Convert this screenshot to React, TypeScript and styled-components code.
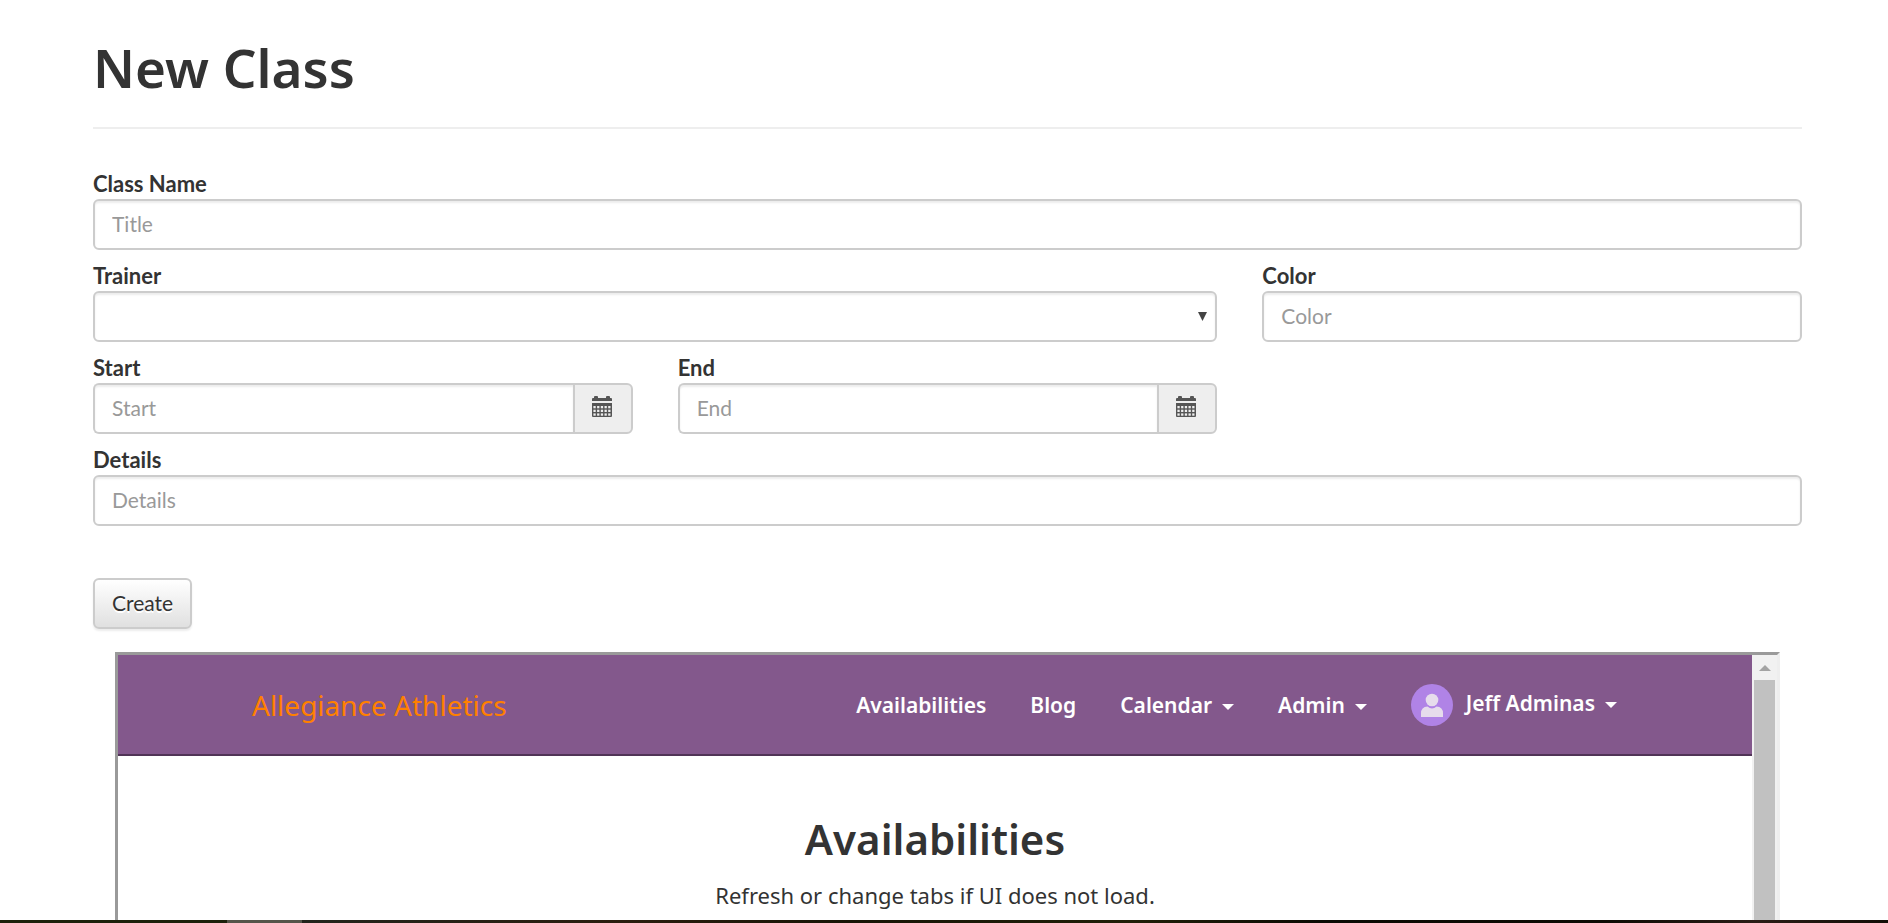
import React from "react";
import styled, { createGlobalStyle, css } from "styled-components";

const GlobalStyle = createGlobalStyle`
  *, *::before, *::after { box-sizing: border-box; }
  body {
    margin: 0;
    background: #fff;
    color: #333;
    font-family: Lato, "Open Sans", sans-serif;
    font-size: 21px;
    line-height: 30px;
  }
  input, select, button { font: inherit; }
`;

const Screen = styled.div`
  display: flex;
  flex-direction: column;
  height: 100vh;
  overflow: hidden;
`;

const Page = styled.main`
  flex: 1;
  min-height: 0;
  display: flex;
  flex-direction: column;
  padding: 38px 86px 0 93px;
`;

const PageTitle = styled.h1`
  margin: 0;
  padding-bottom: 29px;
  border-bottom: 2px solid #eee;
  font-family: "Noto Sans", sans-serif;
  font-size: 53px;
  font-weight: 600;
  line-height: 60px;
`;

const Form = styled.form`
  padding-top: 39px;
`;

const FieldGrid = styled.div`
  display: grid;
  grid-template-columns: repeat(3, 1fr);
  column-gap: 45px;
  row-gap: 10px;
`;

const Field = styled.div<{ $span?: number }>`
  grid-column: span ${(p) => p.$span ?? 1};
  display: flex;
  flex-direction: column;
  min-width: 0;
`;

const Label = styled.label`
  padding-top: 1px;
  font-size: 22px;
  font-weight: 700;
`;

const control = css`
  width: 100%;
  min-width: 0;
  height: 51px;
  padding: 0 17px 2px;
  border: 2px solid #ccc;
  border-radius: 6px;
  background: #fff;
  color: #555;
  box-shadow: inset 0 2px 2px rgba(0, 0, 0, 0.075);
  outline: none;
`;

const Input = styled.input<{ $joined?: boolean }>`
  ${control}
  &::placeholder { color: #999; opacity: 1; }
  ${(p) => p.$joined && "border-right: 0; border-radius: 6px 0 0 6px;"}
`;

const SelectWrap = styled.div`
  display: grid;
  align-items: center;
  > * { grid-area: 1 / 1; }
`;

const Select = styled.select`
  ${control}
  appearance: none;
`;

const SelectArrow = styled.svg`
  justify-self: end;
  margin-right: 10px;
  pointer-events: none;
`;

const Group = styled.div`
  display: flex;
`;

const Addon = styled.button`
  flex: 0 0 60px;
  display: flex;
  align-items: center;
  justify-content: center;
  padding: 0 2px 4px 0;
  border: 2px solid #ccc;
  border-radius: 0 6px 6px 0;
  background: #eee;
  color: #555;
`;

const CreateButton = styled.button`
  height: 51px;
  margin: 52px 0 23px;
  padding: 0 17px 2px;
  border: 2px solid #ccc;
  border-radius: 6px;
  background: linear-gradient(#fff, #e0e0e0);
  color: #333;
  text-shadow: 0 2px 0 #fff;
  box-shadow: inset 0 2px 0 rgba(255, 255, 255, 0.15), 0 2px 2px rgba(0, 0, 0, 0.075);
`;

const Frame = styled.section`
  flex: 1;
  min-height: 0;
  display: flex;
  margin: 0 22px;
  border: 3px solid;
  border-color: #9a9a9a #eee #eee #9a9a9a;
  border-bottom: 0;
`;

const FrameBody = styled.div`
  flex: 1;
  min-width: 0;
  overflow: hidden;
`;

const NavBar = styled.nav`
  height: 101px;
  padding: 0 112px;
  border-bottom: 2px solid #503456;
  background: #83588c;
`;

const NavInner = styled.div`
  display: flex;
  align-items: center;
  justify-content: space-between;
  max-width: 1410px;
  height: 100%;
  margin: 0 auto;
  padding: 0 22px;
  font-family: "Noto Sans", sans-serif;
`;

const Brand = styled.a`
  color: #ff8000;
  font-size: 28px;
  text-decoration: none;
`;

const NavLinks = styled.ul`
  display: flex;
  align-items: center;
  gap: 44px;
  margin: 0;
  padding: 0 1px 0 0;
  list-style: none;
`;

const NavLink = styled.a`
  display: flex;
  align-items: center;
  gap: 10px;
  color: #fff;
  font-weight: 600;
  text-decoration: none;
`;

const UserName = styled.span`
  display: flex;
  align-items: center;
  gap: 10px;
  margin-left: 3px;
  padding-bottom: 4px;
`;

const CaretIcon = styled.svg`
  margin-top: 4px;
`;

const FrameContent = styled.div`
  padding-top: 53px;
  text-align: center;
  font-family: "Noto Sans", sans-serif;
`;

const FrameTitle = styled.h2`
  margin: 0;
  font-size: 42px;
  font-weight: 600;
  line-height: 60px;
`;

const FrameText = styled.p`
  margin: 11px 0 0;
  font-size: 22px;
`;

const ScrollTrack = styled.div`
  flex: 0 0 25px;
  display: flex;
  flex-direction: column;
  padding: 0 2px;
  background: #f1f1f1;
`;

const ScrollUp = styled.button`
  flex: 0 0 25px;
  display: flex;
  align-items: center;
  justify-content: center;
  padding: 0;
  border: 0;
  background: none;
`;

const ScrollThumb = styled.div`
  flex: 1;
  background: #c1c1c1;
`;

const BottomStrip = styled.footer`
  flex: 0 0 3px;
  background: linear-gradient(
    90deg,
    #1c210b 0 12%,
    #55554a 12% 16%,
    #22241c 16%,
    #2a1d0e 33%,
    #171405 45%,
    #201f08 60%,
    #0b0a03 70%,
    #0d0b04 85%,
    #2a1d16 93%,
    #120d06
  );
`;

function Caret() {
  return (
    <CaretIcon width="12" height="6" viewBox="0 0 12 6" aria-hidden="true">
      <path d="M0 0h12L6 6z" fill="currentColor" />
    </CaretIcon>
  );
}

function CalendarIcon() {
  const cells = [0, 1, 2].flatMap((row) =>
    [0, 1, 2, 3, 4].map((col) => (
      <rect key={`${row}-${col}`} x={1.4 + col * 3.7} y={10 + row * 3.7} width="2.300" height="2.300" fill="#eee" />
    ))
  );
  return (
    <svg width="20" height="21" viewBox="0 0 20 21" aria-hidden="true">
      <path d="M0 5V3q0-1 1-1h1V1q0-1 1-1h2q1 0 1 1v1h8V1q0-1 1-1h2q1 0 1 1v1h1q1 0 1 1v2zM0 7h20v13q0 1-1 1H1q-1 0-1-1z" fill="currentColor" />
      {cells}
    </svg>
  );
}

function Avatar() {
  return (
    <svg width="42" height="42" viewBox="0 0 42 42" aria-hidden="true">
      <circle cx="21" cy="21" r="21" fill="#b083e6" />
      <circle cx="21" cy="16" r="6.3" fill="#e6dcec" />
      <path d="M10 33v-3.500Q10 23 16.500 22.600 21 26.500 25.500 22.600 32 23 32 29.500V33z" fill="#e6dcec" />
    </svg>
  );
}

function DateField({ id, label }: { id: string; label: string }) {
  return (
    <Field>
      <Label htmlFor={id}>{label}</Label>
      <Group>
        <Input id={id} type="text" placeholder={label} $joined />
        <Addon type="button" aria-label={`Pick ${label.toLowerCase()} date`}>
          <CalendarIcon />
        </Addon>
      </Group>
    </Field>
  );
}

const links = [
  { text: "Availabilities", menu: false },
  { text: "Blog", menu: false },
  { text: "Calendar", menu: true },
  { text: "Admin", menu: true },
];

export default function App() {
  return (
    <Screen>
      <GlobalStyle />
      <Page>
        <PageTitle>New Class</PageTitle>
        <Form onSubmit={(e) => e.preventDefault()}>
          <FieldGrid>
            <Field $span={3}>
              <Label htmlFor="name">Class Name</Label>
              <Input id="name" type="text" placeholder="Title" />
            </Field>
            <Field $span={2}>
              <Label htmlFor="trainer">Trainer</Label>
              <SelectWrap>
                <Select id="trainer" defaultValue="">
                  <option value="" />
                </Select>
                <SelectArrow width="9" height="9" viewBox="0 0 9 9" aria-hidden="true">
                  <path d="M0 0h9L4.500 9z" fill="#444" />
                </SelectArrow>
              </SelectWrap>
            </Field>
            <Field>
              <Label htmlFor="color">Color</Label>
              <Input id="color" type="text" placeholder="Color" />
            </Field>
            <DateField id="start" label="Start" />
            <DateField id="end" label="End" />
            <Field $span={3}>
              <Label htmlFor="details">Details</Label>
              <Input id="details" type="text" placeholder="Details" />
            </Field>
          </FieldGrid>
          <CreateButton type="submit">Create</CreateButton>
        </Form>
        <Frame>
          <FrameBody>
            <NavBar>
              <NavInner>
                <Brand href="#">Allegiance Athletics</Brand>
                <NavLinks>
                  {links.map((link) => (
                    <li key={link.text}>
                      <NavLink href="#">
                        {link.text}
                        {link.menu && <Caret />}
                      </NavLink>
                    </li>
                  ))}
                  <li>
                    <NavLink href="#">
                      <Avatar />
                      <UserName>
                        Jeff Adminas
                        <Caret />
                      </UserName>
                    </NavLink>
                  </li>
                </NavLinks>
              </NavInner>
            </NavBar>
            <FrameContent>
              <FrameTitle>Availabilities</FrameTitle>
              <FrameText>Refresh or change tabs if UI does not load.</FrameText>
            </FrameContent>
          </FrameBody>
          <ScrollTrack>
            <ScrollUp type="button" aria-label="Scroll up">
              <svg width="12" height="6" viewBox="0 0 12 6" aria-hidden="true">
                <path d="M0 6h12L6 0z" fill="#a3a3a3" />
              </svg>
            </ScrollUp>
            <ScrollThumb />
          </ScrollTrack>
        </Frame>
      </Page>
      <BottomStrip />
    </Screen>
  );
}
